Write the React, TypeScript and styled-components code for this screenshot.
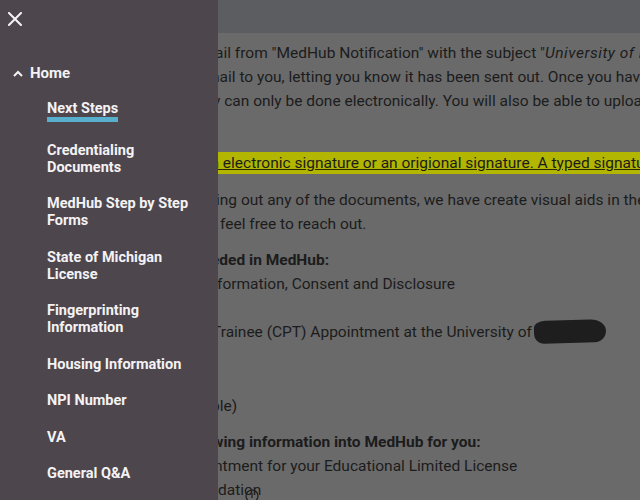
import React from "react";
import styled, { createGlobalStyle } from "styled-components";

const Global = createGlobalStyle`
  html, body { margin: 0; padding: 0; background: #6a6a6a; }
  body { font-family: Roboto, "Liberation Sans", Arial, sans-serif; overflow: hidden; }
  * { box-sizing: border-box; }
`;

const Page = styled.div`
  position: relative;
  width: 640px;
  height: 500px;
  overflow: hidden;
  background: #6a6a6a;
  display: flex;
  flex-direction: column;
`;

const TopBar = styled.header`
  height: 33px;
  flex: none;
  background: #5c5d60;
`;

const Content = styled.main`
  padding: 8px 0 0 0;
  color: #1c1c1c;
  font-size: 15.5px;
  line-height: 24px;
  white-space: nowrap;
`;

const Para = styled.p<{ $gap?: number }>`
  margin: ${(p) => p.$gap ?? 12}px 0 0 0;
  &:first-child { margin-top: 0; }
`;

const Line = styled.div<{ $x: number; $bold?: boolean }>`
  position: relative;
  height: 24px;
  padding-left: ${(p) => p.$x}px;
  font-weight: ${(p) => (p.$bold ? 700 : 400)};
`;

const Subject = styled.i`
  letter-spacing: 0.5px;
`;

const Mark = styled.span`
  background: #b2b600;
  text-decoration: underline;
  text-decoration-color: #2a2a00;
  padding: 2px 0;
`;

const Redacted = styled.span`
  display: inline-block;
  width: 72px;
  height: 23px;
  margin-left: 2px;
  vertical-align: -6px;
  background: #1e1e1e;
  border-radius: 12px 16px 12px 10px / 8px 12px 12px 10px;
  transform: rotate(-1.5deg);
`;

const CursorMark = styled.svg`
  position: absolute;
  left: 245px;
  top: 11px;
`;

const Drawer = styled.nav`
  position: fixed;
  top: 0;
  left: 0;
  bottom: 0;
  width: 218px;
  background: #4d474d;
  color: #f4f2f4;
  display: flex;
  flex-direction: column;
  padding: 12px 18px 0 8px;
`;

const CloseButton = styled.button`
  width: 14px;
  height: 14px;
  padding: 0;
  border: 0;
  background: none;
  display: flex;
  cursor: pointer;
`;

const HomeRow = styled.div`
  margin-top: 37px;
  display: flex;
  align-items: center;
  gap: 7px;
  padding-left: 5px;
  font-size: 15px;
  line-height: 20px;
  font-weight: 700;
`;

const Items = styled.ul`
  list-style: none;
  margin: 17px 0 0 0;
  padding: 0 0 0 39px;
  display: flex;
  flex-direction: column;
  gap: 19.5px;
`;

const Item = styled.li<{ $active?: boolean }>`
  font-size: 14.5px;
  line-height: 17px;
  font-weight: 700;
  span {
    display: inline-block;
    border-bottom: ${(p) => (p.$active ? "5px solid #58afcd" : "0")};
  }
`;

const items = [
  "Next Steps",
  "Credentialing Documents",
  "MedHub Step by Step Forms",
  "State of Michigan License",
  "Fingerprinting Information",
  "Housing Information",
  "NPI Number",
  "VA",
  "General Q&A",
];

export default function App() {
  return (
    <>
      <Global />
      <Page>
        <TopBar />
        <Content>
          <Para>
            <Line $x={215}>
              ail from "MedHub Notification" with the subject "<Subject>University of Michigan</Subject>"
            </Line>
            <Line $x={206}>
              mail to you, letting you know it has been sent out. Once you have
            </Line>
            <Line $x={213}>
              y can only be done electronically. You will also be able to upload
            </Line>
          </Para>
          <Para $gap={38}>
            <Line $x={202}>
              <Mark>an electronic signature or an origional signature. A typed signature</Mark>
            </Line>
          </Para>
          <Para $gap={13}>
            <Line $x={216}>
              ing out any of the documents, we have create visual aids in the
            </Line>
            <Line $x={220}>feel free to reach out.</Line>
          </Para>
          <Para $gap={12}>
            <Line $x={211} $bold>
              eded in MedHub:
            </Line>
            <Line $x={217}>formation, Consent and Disclosure</Line>
            <Line $x={217}>&nbsp;</Line>
            <Line $x={212}>
              Trainee (CPT) Appointment at the University of<Redacted />
            </Line>
            <Line $x={217}>&nbsp;</Line>
            <Line $x={217}>&nbsp;</Line>
          </Para>
          <Para $gap={2}>
            <Line $x={211}>ble)</Line>
          </Para>
          <Para>
            <Line $x={212} $bold>
              wing information into MedHub for you:
            </Line>
            <Line $x={214}>ntment for your Educational Limited License</Line>
            <Line $x={218}>
              dation
              <CursorMark width="14" height="14" viewBox="0 0 14 14">
                <circle cx="7" cy="7" r="6" fill="none" stroke="#1c1c1c" strokeWidth="1.2" />
                <path d="M7 4v5" stroke="#1c1c1c" strokeWidth="1.2" />
              </CursorMark>
            </Line>
          </Para>
        </Content>
        <Drawer>
          <CloseButton aria-label="Close">
            <svg width="14" height="14" viewBox="0 0 14 14">
              <path d="M1 1L13 13M13 1L1 13" stroke="#f4f2f4" strokeWidth="2" strokeLinecap="square" />
            </svg>
          </CloseButton>
          <HomeRow>
            <svg width="10" height="7" viewBox="0 0 10 7">
              <path d="M1 6L5 2L9 6" fill="none" stroke="#f4f2f4" strokeWidth="2" />
            </svg>
            Home
          </HomeRow>
          <Items>
            {items.map((t, i) => (
              <Item key={t} $active={i === 0}>
                <span>{t}</span>
              </Item>
            ))}
          </Items>
        </Drawer>
      </Page>
    </>
  );
}
